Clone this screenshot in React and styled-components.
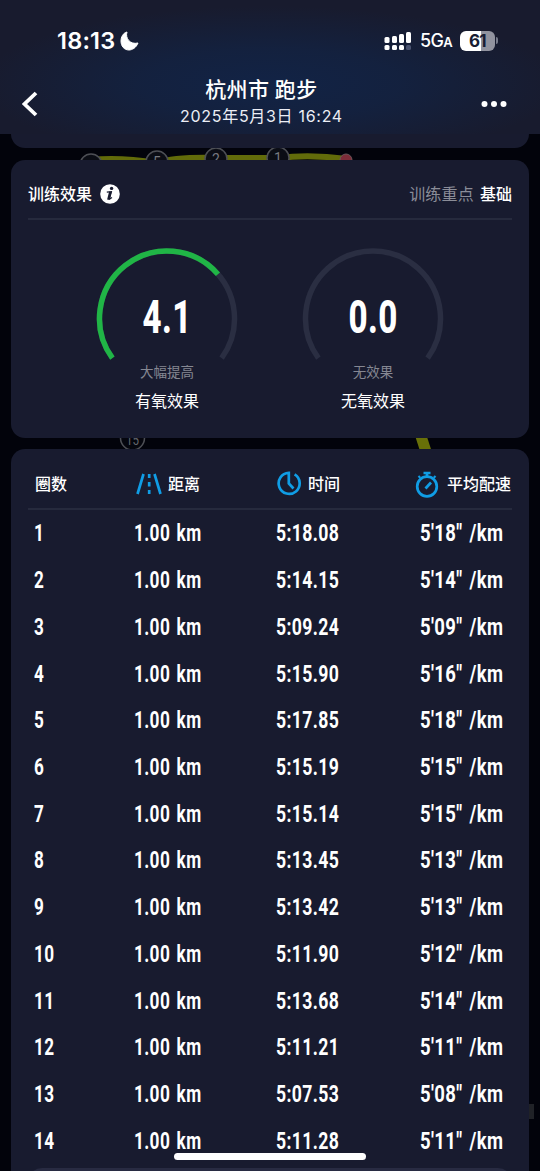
import React from 'react';
import styled, { createGlobalStyle } from 'styled-components';

const Global = createGlobalStyle`
  * { box-sizing: border-box; }
  body { margin: 0; background: #02030b; overflow: hidden; }
`;
const cjk = `"Noto Sans CJK SC", sans-serif`;

const Screen = styled.main`
  position: relative;
  width: 540px;
  height: 1171px;
  overflow: hidden;
  background: #02030b;
  color: #fff;
  font-family: ${cjk};
`;
const MapLayer = styled.svg`
  position: absolute;
  inset: 0;
`;
const Content = styled.div`
  position: relative;
  display: flex;
  flex-direction: column;
`;
const Header = styled.header`
  height: 134px;
  padding-top: 25px;
  background:
    radial-gradient(ellipse 290px 78px at 50% 84px, rgba(17, 36, 72, .9) 0%, rgba(18, 35, 68, .75) 45%, rgba(22, 30, 56, 0) 100%),
    #181b2e;
`;
const StatusBar = styled.div`
  display: flex;
  align-items: center;
  height: 31px;
  padding: 0 42px 0 57px;
  font-family: Inter, sans-serif;
`;
const Clock = styled.span`
  width: 59px;
  font-size: 23.5px;
  font-weight: 600;
  letter-spacing: 0.2px;
`;
const Moon = styled.svg`
  margin-left: 4px;
  margin-right: auto;
`;
const Network = styled.span`
  width: 32px;
  margin: 0 8px 0 8px;
  font-size: 18px;
  font-weight: 500;
  letter-spacing: -0.7px;
  white-space: nowrap;
  small { font-size: 13px; font-weight: 600; }
`;
const Battery = styled.div`
  display: flex;
  align-items: center;
  gap: 1px;
`;
const BatteryBody = styled.span`
  width: 35px;
  height: 20px;
  border-radius: 6px;
  background: linear-gradient(90deg, #fff 61%, #91939f 61%);
  color: #181d33;
  font-size: 17px;
  font-weight: 700;
  line-height: 20px;
  letter-spacing: -0.8px;
  text-align: center;
`;
const BatteryCap = styled.i`
  width: 2px;
  height: 7px;
  border-radius: 0 2px 2px 0;
  background: #777b8b;
`;
const NavBar = styled.div`
  display: flex;
  align-items: center;
  justify-content: space-between;
  height: 76px;
  padding: 16px 33px 0 22px;
`;
const Back = styled.svg`width: 16px; height: 26px; margin-top: 3px;`;
const More = styled.svg`width: 26px; height: 8px; margin-top: 4px;`;
const Titles = styled.div`
  display: flex;
  flex-direction: column;
  align-items: center;
  width: 200px;
  margin-left: 4px;
`;
const Title = styled.h1`
  margin: -1px 0 0;
  font: 500 21px/28px ${cjk};
  letter-spacing: .5px;
  white-space: nowrap;
`;
const DateLine = styled.div`
  margin-top: 1px;
  font: 400 16px/26px Inter, ${cjk};
  letter-spacing: .7px;
  white-space: nowrap;
  color: #eceef5;
`;
const PreviousCard = styled.div`
  height: 14px;
  margin: 0 11px 12px;
  border-radius: 0 0 14px 14px;
  background: #181b2f;
`;
const Card = styled.section`
  height: ${p => p.$height}px;
  margin: 0 11px 11px;
  padding: 0 17px;
  border-radius: 14px;
  background: #181b2f;
`;
const CardHead = styled.div`
  display: flex;
  align-items: center;
  height: 60px;
  padding-top: 8px;
  border-bottom: 2px solid #262a3d;
  font-size: 16px;
  font-weight: 500;
`;
const Info = styled.svg`margin: 2px 0 0 8px;`;
const Focus = styled.span`
  margin-left: auto;
  color: #8b8d98;
  font-weight: 400;
  letter-spacing: .2px;
  b { margin-left: 6px; color: #fff; font-weight: 500; letter-spacing: 0; }
`;
const Gauges = styled.div`
  display: flex;
  justify-content: center;
  gap: 66px;
  padding-top: 27px;
`;
const Gauge = styled.div`
  display: flex;
  flex-direction: column;
  align-items: center;
  width: 140px;
`;
const Dial = styled.div`
  display: grid;
  width: 142px;
  height: 113px;
  > * { grid-area: 1 / 1; }
`;
const Value = styled.strong`
  justify-self: center;
  margin-top: 42px;
  font: 800 46px/56px Roboto, sans-serif;
  letter-spacing: .6px;
  transform: scaleX(.72);
`;
const Effect = styled.span`
  margin-top: 1px;
  color: #858792;
  font-size: 13.5px;
  line-height: 20px;
`;
const EffectName = styled.span`
  margin-top: 7px;
  font-size: 16px;
  line-height: 24px;
`;
const LapGrid = styled.div`
  display: grid;
  grid-template-columns: 100px 142px 144px 98px;
`;
const LapHead = styled(LapGrid)`
  height: 61px;
  padding-top: 9px;
  align-items: center;
  border-bottom: 2px solid #262a3d;
  font-size: 16px;
  font-weight: 500;
`;
const HeadCell = styled.span`
  display: flex;
  align-items: center;
  gap: ${p => p.$gap || 6}px;
  margin-left: ${p => p.$shift || 0}px;
  white-space: nowrap;
  svg { margin-top: 2px; }
`;
const LapRow = styled(LapGrid)`
  height: 46.72px;
  align-items: center;
  padding-left: 7px;
`;
const Metric = styled.span`
  justify-self: start;
  margin-left: -1px;
  font: 700 24.5px/30px Roboto, sans-serif;
  letter-spacing: .5px;
  word-spacing: 2.5px;
  white-space: nowrap;
  transform: scaleX(${p => p.$scale});
  transform-origin: left center;
`;
const NextPanel = styled.div`
  position: absolute;
  left: 28px;
  top: 1168px;
  width: 484px;
  height: 30px;
  border-radius: 14px;
  background: #282b42;
`;
const HomeBar = styled.div`
  position: absolute;
  left: 174px;
  top: 1153px;
  width: 192px;
  height: 7px;
  border-radius: 4px;
  background: #fff;
`;

const laps = [
  ['5:18.08', `5'18"`], ['5:14.15', `5'14"`], ['5:09.24', `5'09"`], ['5:15.90', `5'16"`],
  ['5:17.85', `5'18"`], ['5:15.19', `5'15"`], ['5:15.14', `5'15"`], ['5:13.45', `5'13"`],
  ['5:13.42', `5'13"`], ['5:11.90', `5'12"`], ['5:13.68', `5'14"`], ['5:11.21', `5'11"`],
  ['5:07.53', `5'08"`], ['5:11.28', `5'11"`],
];

const point = a => {
  const r = (a * Math.PI) / 180;
  return `${71 + 67.5 * Math.cos(r)} ${71.5 + 67.5 * Math.sin(r)}`;
};
const arc = (from, to) => `M${point(from)} A67.5 67.5 0 ${to - from > 180 ? 1 : 0} 1 ${point(to)}`;

function EffectGauge({ value, effect, name, end }) {
  return (
    <Gauge>
      <Dial>
        <svg width="142" height="113" fill="none" strokeWidth="5.5">
          <path d={arc(144, 396)} stroke="#2a2e42" />
          {end && <path d={arc(144, end)} stroke="#20b546" />}
        </svg>
        <Value>{value}</Value>
      </Dial>
      <Effect>{effect}</Effect>
      <EffectName>{name}</EffectName>
    </Gauge>
  );
}

function Marker({ x, y, label }) {
  return (
    <g>
      <circle cx={x} cy={y} r="11" fill="#0b0d15" stroke="#4d4f55" strokeWidth="1.5" />
      <text x={x} y={y + 5} textAnchor="middle" fill="#777980" fontFamily="Roboto, sans-serif" fontSize="14">{label}</text>
    </g>
  );
}

export default function App() {
  return (
    <Screen>
      <Global />
      <MapLayer width="540" height="1171">
        <path d="M91 160 Q120 157 157 163 Q175 157 216 158 L278 158 Q310 154 347 159" fill="none" stroke="#626b0a" strokeWidth="6" />
        <path d="M419 430L430 464" stroke="#687008" strokeWidth="11" />
        <Marker x={91} y={165} label="" />
        <Marker x={157} y={162} label="5" />
        <Marker x={216} y={159} label="2" />
        <Marker x={278} y={158} label="1" />
        <circle cx="346" cy="160" r="6" fill="#7d2c38" stroke="#6b565b" />
        <circle cx="132.5" cy="438" r="12" fill="#05060e" stroke="#4d4f55" strokeWidth="1.5" />
        <text x="132.5" y="445" textAnchor="middle" fill="#62646a" fontFamily="Roboto, sans-serif" fontSize="15" textLength="13" lengthAdjust="spacingAndGlyphs">15</text>
        <rect x="528" y="1104" width="6" height="15" fill="#202227" />
      </MapLayer>
      <Content>
        <Header>
          <StatusBar>
            <Clock>18:13</Clock>
            <Moon width="19" height="20" viewBox="0 0 19 20"><path d="M7 1C5 7 10 14 18 12C16 17 12 19 9 19C4 19 1 15 1 10C1 6 3 2 7 1Z" fill="#fff" stroke="#fff" strokeLinejoin="round" /></Moon>
            <svg width="28" height="20" fill="#fff">
              <rect x="0.5" y="6" width="5" height="6" rx="1.5" /><rect x="8" y="5" width="5" height="7" rx="1.5" />
              <rect x="15" y="3" width="5" height="9" rx="1.5" /><rect x="22" y="1" width="5" height="11" rx="1.5" />
              <rect x="0.5" y="14" width="5" height="5" rx="1.5" /><rect x="8" y="14" width="5" height="5" rx="1.5" />
              <rect x="15" y="14" width="5" height="5" rx="1.5" /><rect x="22" y="14" width="5" height="5" rx="1.5" fill="#4a5370" />
            </svg>
            <Network>5G<small>A</small></Network>
            <Battery><BatteryBody>61</BatteryBody><BatteryCap /></Battery>
          </StatusBar>
          <NavBar>
            <Back viewBox="0 0 16 26"><path d="M14 2L2.5 13L14 24" fill="none" stroke="#fff" strokeWidth="3.8" /></Back>
            <Titles>
              <Title>杭州市 跑步</Title>
              <DateLine>2025年5月3日 16:24</DateLine>
            </Titles>
            <More viewBox="0 0 26 8" fill="#fff"><circle cx="3.5" cy="4" r="3" /><circle cx="13" cy="4" r="3" /><circle cx="22.5" cy="4" r="3" /></More>
          </NavBar>
        </Header>
        <PreviousCard />
        <Card $height={278}>
          <CardHead>
            训练效果
            <Info width="20" height="20" viewBox="0 0 20 20">
              <circle cx="10" cy="10" r="9.8" fill="#fff" />
              <circle cx="11.6" cy="4.4" r="1.7" fill="#181b2f" />
              <path d="M6.8 8.2L11.4 7.6L9.4 14.6Q9.4 15.6 12 13.6" fill="none" stroke="#181b2f" strokeWidth="1.2" />
              <path d="M10.4 7.8L8.4 15.8" stroke="#181b2f" strokeWidth="2.6" />
            </Info>
            <Focus>训练重点<b>基础</b></Focus>
          </CardHead>
          <Gauges>
            <EffectGauge value="4.1" effect="大幅提高" name="有氧效果" end={319} />
            <EffectGauge value="0.0" effect="无效果" name="无氧效果" />
          </Gauges>
        </Card>
        <Card $height={760}>
          <LapHead>
            <HeadCell $shift={7}>圈数</HeadCell>
            <HeadCell $shift={8}>
              <svg width="26" height="22" fill="none" stroke="#109de5" strokeWidth="2.7"><path d="M7.5 1L1.5 21M18.5 1L24.5 21" /><path d="M13.2 1V5M13.2 9V13.5M13.2 17V21" /></svg>
              距离
            </HeadCell>
            <HeadCell $shift={6} $gap={6}>
              <svg width="26" height="26" fill="none" stroke="#109de5" strokeWidth="2.7"><path d="M18.6 3.4A10.5 10.5 0 1 1 12.8 1.9V12.5L17.5 17.5" /></svg>
              时间
            </HeadCell>
            <HeadCell $shift={0} $gap={7}>
              <svg width="26" height="27" fill="none" stroke="#109de5" strokeWidth="2.7"><circle cx="13" cy="15.5" r="9.8" /><path d="M9.5 2H16.5M13 2V6" /><path d="M11.5 17.5L17 11.5" /><path d="M19.8 6.8L21.5 5" strokeWidth="2" /><path d="M6.2 6.8L4.5 5" strokeWidth="2" /></svg>
              平均配速
            </HeadCell>
          </LapHead>
          {laps.map(([time, pace], i) => (
            <LapRow key={i}>
              <Metric $scale={.7}>{i + 1}</Metric>
              <Metric $scale={.705}>1.00 km</Metric>
              <Metric $scale={.72}>{time}</Metric>
              <Metric $scale={.755}>{pace} /km</Metric>
            </LapRow>
          ))}
        </Card>
      </Content>
      <NextPanel />
      <HomeBar />
    </Screen>
  );
}
